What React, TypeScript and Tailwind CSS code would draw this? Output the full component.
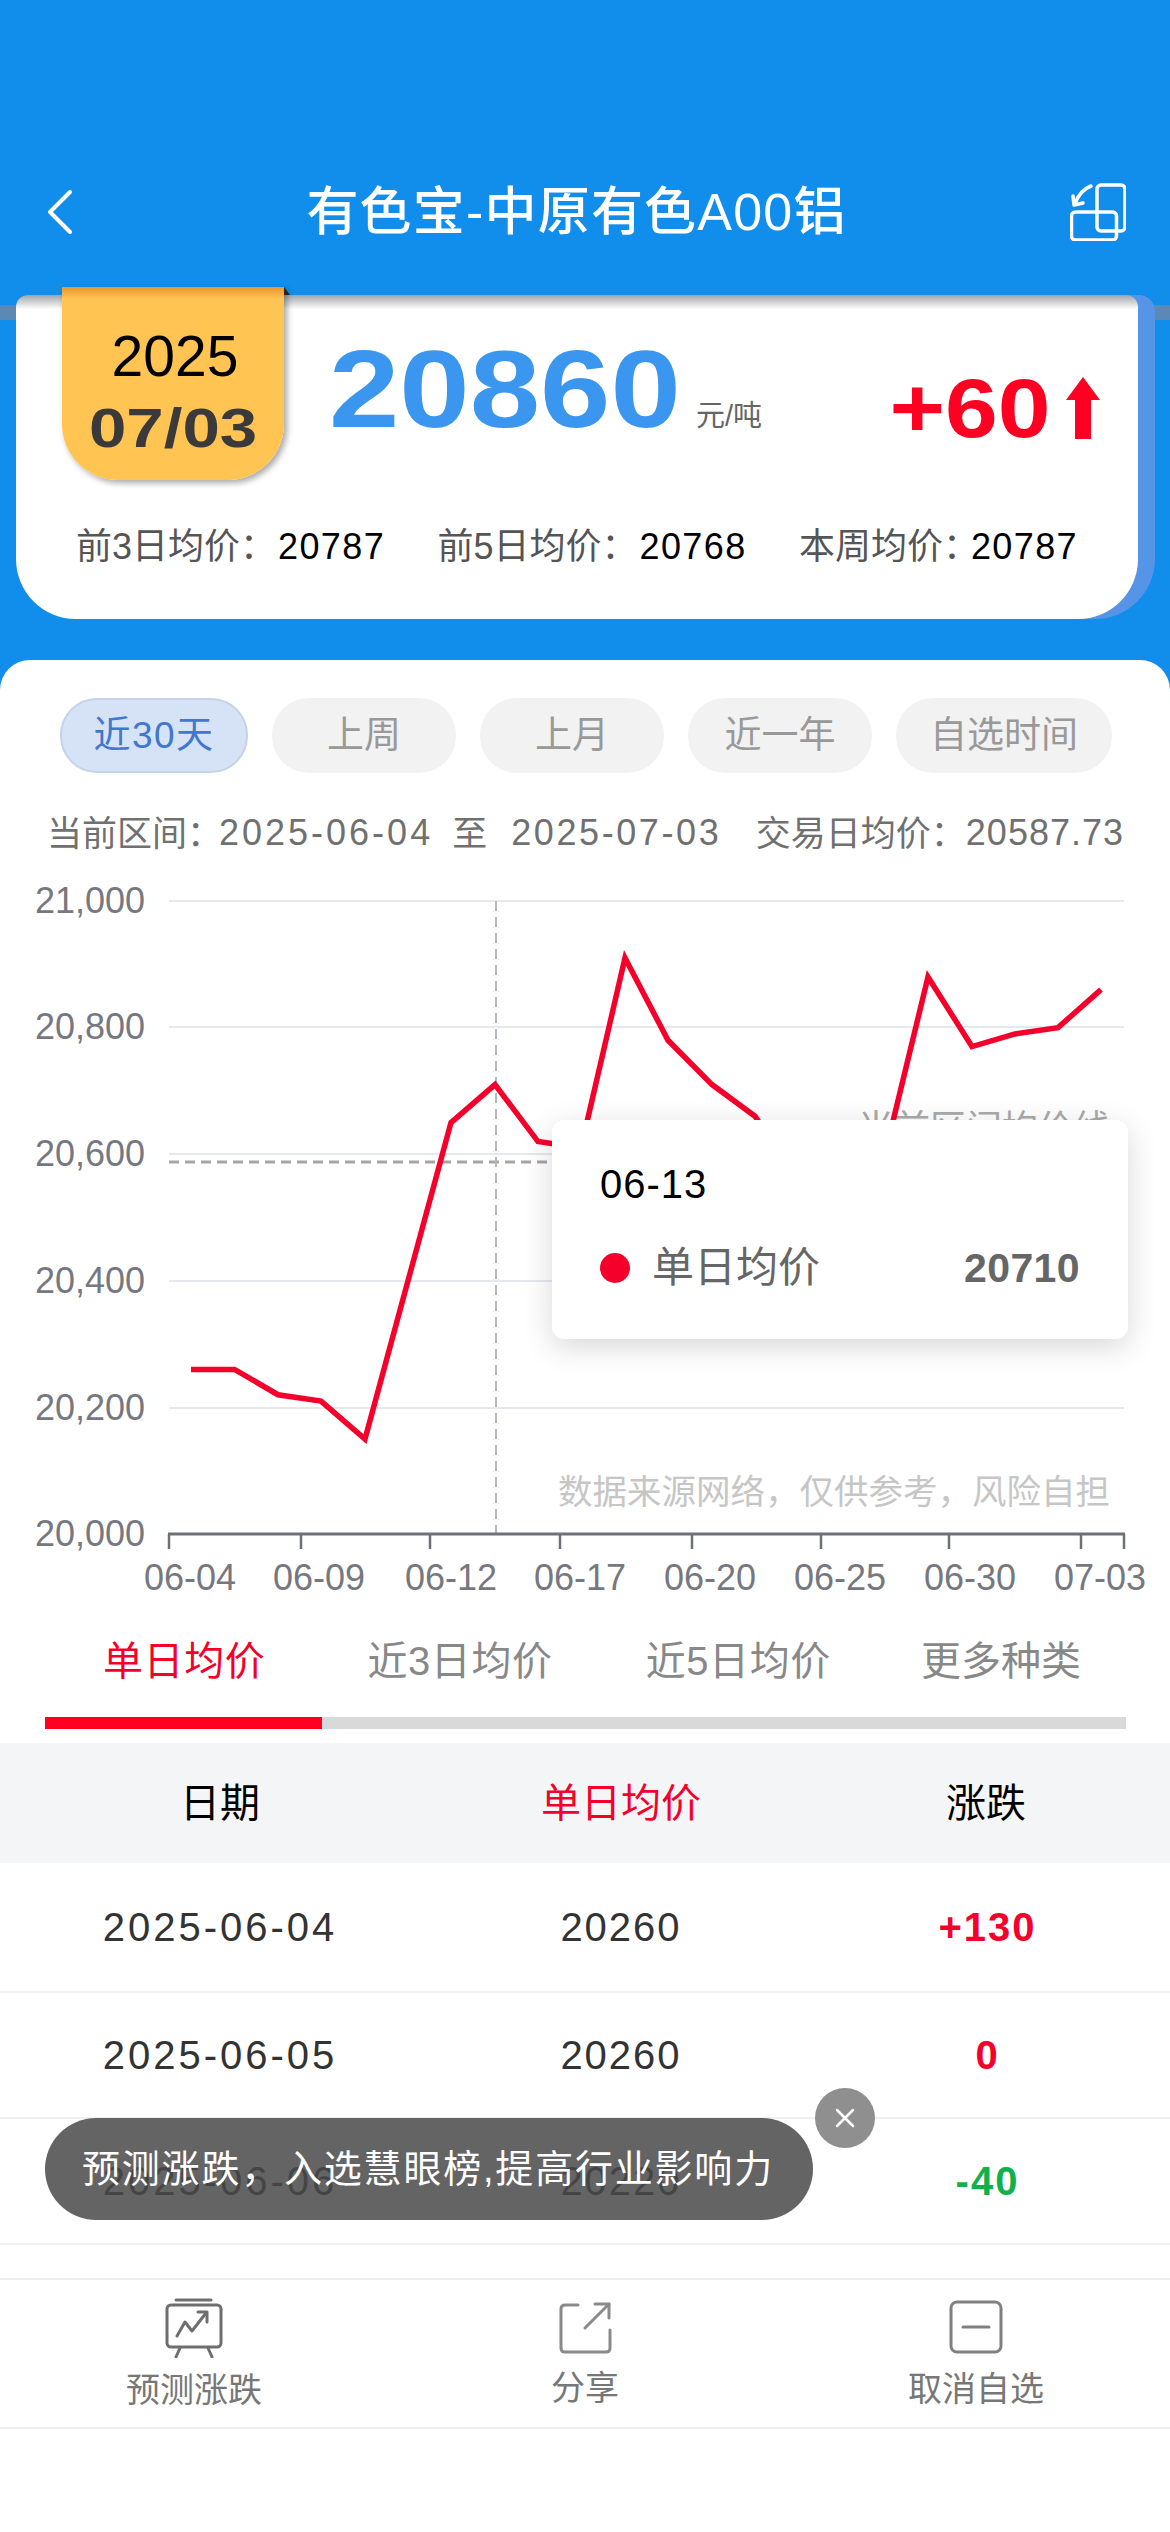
const vals = [20260,20260,20220,20210,20150,20400,20650,20710,20620,20610,20910,20780,20710,20660,20560,20400,20600,20880,20770,20790,20800,20860];
const xs = [191,234.5,278,321,365,408,451,495,538,581,625,668,712,755,798,842,885,928,972,1015,1058,1101];
const points = vals.map((v, i) => `${xs[i]},${1534 - (v - 20000) * 0.633}`).join(" ");

const grid = [
  { y: 901, t: "21,000" },
  { y: 1027, t: "20,800" },
  { y: 1154, t: "20,600" },
  { y: 1281, t: "20,400" },
  { y: 1408, t: "20,200" },
];
const ticks = [169, 301, 430, 560, 692, 821, 949, 1081, 1124];
const xLabels = [
  [190, "06-04"], [319, "06-09"], [451, "06-12"], [580, "06-17"],
  [710, "06-20"], [840, "06-25"], [970, "06-30"], [1100, "07-03"],
] as const;

const ranges = [
  { t: "近30天", w: "w-[188px]", active: true },
  { t: "上周", w: "w-[184px]" },
  { t: "上月", w: "w-[184px]" },
  { t: "近一年", w: "w-[184px]" },
  { t: "自选时间", w: "w-[216px]" },
];

const rows = [
  { d: "2025-06-04", v: "20260", c: "+130", cls: "text-[#F5002B]", h: "h-[130px]" },
  { d: "2025-06-05", v: "20260", c: "0", cls: "text-[#F5002B]", h: "h-[126px]" },
  { d: "2025-06-06", v: "20220", c: "-40", cls: "text-[#10B14B]", h: "h-[126px]" },
];

function Chart() {
  return (
    <div className="relative h-[740px] w-full mt-[22px]">
      <svg width="1170" height="740" viewBox="0 880 1170 740" className="block">
        {grid.map((g) => (
          <g key={g.y}>
            <line x1="169" x2="1124" y1={g.y} y2={g.y} stroke="#E6E8F0" strokeWidth="2" />
            <text x="145" y={g.y + 12} textAnchor="end" fontSize="36" fill="#77787F">{g.t}</text>
          </g>
        ))}
        <text x="145" y="1546" textAnchor="end" fontSize="36" fill="#77787F">20,000</text>
        <text x="1110" y="1141" textAnchor="end" fontSize="36" fill="#AAAAAA">当前区间均价线</text>
        <line x1="169" x2="1124" y1="1162" y2="1162" stroke="#A5A5A5" strokeWidth="3" strokeDasharray="10 6" />
        <line x1="496" x2="496" y1="901" y2="1534" stroke="#B5B7BD" strokeWidth="2" strokeDasharray="10 6" />
        <polyline points={points} fill="none" stroke="#F5002B" strokeWidth="5.5" strokeLinejoin="miter" />
        <text x="1110" y="1504" textAnchor="end" fontSize="34.5" fill="#C6C6C6">数据来源网络，仅供参考，风险自担</text>
        <line x1="168" x2="1125" y1="1534" y2="1534" stroke="#6E7079" strokeWidth="3" />
        {ticks.map((x) => (
          <line key={x} x1={x} x2={x} y1="1534" y2="1549" stroke="#6E7079" strokeWidth="2.5" />
        ))}
        {xLabels.map(([x, t]) => (
          <text key={t} x={x} y="1590" textAnchor="middle" fontSize="36" fill="#77787F">{t}</text>
        ))}
      </svg>
      <div className="absolute left-[552px] top-[240px] w-[576px] h-[219px] bg-white rounded-[12px] shadow-[0_8px_30px_rgba(0,0,0,0.16)] px-[48px] pt-[40px]">
        <div className="text-[40px] leading-[48px] tracking-[1px] text-black">06-13</div>
        <div className="flex items-center mt-[36px] h-[48px]">
          <span className="w-[30px] h-[30px] rounded-full bg-[#F5002B]" />
          <span className="ml-[22px] text-[42px] leading-none text-[#666666]">单日均价</span>
          <span className="ml-auto text-[41px] leading-none font-bold tracking-[0.4px] text-[#666666]">20710</span>
        </div>
      </div>
    </div>
  );
}

export default function App() {
  return (
    <div className="relative w-[1170px] h-[2532px] overflow-hidden bg-white [font-family:'Liberation_Sans','Noto_Sans_CJK_SC',sans-serif]">
      {/* blue top */}
      <div className="relative h-[690px] bg-[#118DEC] pt-[164px]">
        <div className="flex items-center justify-between h-[96px] pl-[47px] pr-[44px] text-white">
          <svg width="26" height="46" viewBox="0 0 26 46" fill="none" stroke="white" strokeWidth="4" strokeLinecap="round" strokeLinejoin="round">
            <path d="M23 3 L3 23 L23 43" />
          </svg>
          <span className="ml-[10px] text-[52px] leading-none font-medium tracking-[1.2px]">有色宝-中原有色A00铝</span>
          <svg width="56" height="58" viewBox="0 0 56 58" fill="none" stroke="white" strokeWidth="3.5" strokeLinejoin="round" strokeLinecap="round">
            <rect x="27" y="2" width="28" height="46" rx="4" />
            <rect x="1.5" y="29" width="45" height="28" rx="4" />
            <path d="M21 3 C13 6 8 12 5 21" />
            <path d="M3 13 L4 22 L13 20" />
          </svg>
        </div>

        <div className="absolute left-0 top-[305px] w-full h-[15px] bg-[#5B88B5]" />

        <div className="absolute left-[16px] top-[295px] w-[1139px] h-[324px]">
          <div className="absolute left-[40px] top-0 w-[1099px] h-full bg-[#5594E6] rounded-t-[16px] rounded-b-[60px]" />
          <div className="absolute left-0 top-0 w-[1122px] h-full rounded-t-[12px] rounded-b-[60px] bg-[linear-gradient(#A0A4A8_0px,#FFFFFF_14px)]">
            <div className="flex items-start h-[190px]">
              <span className="ml-[313px] mt-[39px] text-[110px] leading-none font-bold origin-left scale-x-[1.15] text-[#3A96EE]">20860</span>
              <span className="ml-[61px] mt-[107px] text-[29px] leading-none text-[#666666]">元/吨</span>
              <span className="ml-auto mt-[71px] text-[84px] leading-none font-bold origin-right scale-x-[1.13] text-[#FF0022]">+60</span>
              <svg width="34" height="62" viewBox="0 0 34 62" fill="#FF0022" className="ml-[16px] mr-[38px] mt-[82px]">
                <path d="M17 0 L34 23 L25 23 L25 62 L9 62 L9 23 L0 23 Z" />
              </svg>
            </div>
            <div className="flex items-center justify-between h-[50px] mt-[37px] pl-[60px] pr-[60px] text-[36px] leading-none">
              <span className="text-[#555555]">前3日均价：<span className="ml-[2px] tracking-[1.4px] text-black">20787</span></span>
              <span className="text-[#555555]">前5日均价：<span className="ml-[2px] tracking-[1.4px] text-black">20768</span></span>
              <span className="text-[#555555]">本周均价：<span className="-ml-[8px] tracking-[1.4px] text-black">20787</span></span>
            </div>
          </div>
        </div>

        {/* date ribbon */}
        <div className="absolute left-[284px] top-[287px] w-0 h-0 border-r-[6px] border-b-[8px] border-r-transparent border-b-[#3A2A10]" />
        <div className="absolute left-[62px] top-[287px] w-[222px] h-[193px] rounded-b-[56px] bg-[linear-gradient(#E8962F_0px,#FFC452_12px)] shadow-[3px_3px_6px_rgba(0,0,0,0.35)] flex flex-col items-center">
          <span className="mt-[41px] ml-[4px] text-[57px] leading-none text-black">2025</span>
          <span className="mt-[15px] text-[56px] leading-none font-bold scale-x-[1.2] text-[#3A3A3A]">07/03</span>
        </div>
      </div>

      {/* white panel */}
      <div className="relative -mt-[30px] bg-white rounded-t-[30px] pt-[38px]">
        <div className="flex gap-[24px] pl-[60px]">
          {ranges.map((r) => (
            <div
              key={r.t}
              className={`${r.w} h-[75px] rounded-[37px] flex items-center justify-center text-[37px] leading-none ${r.active ? "bg-[#D6E3F7] border-2 border-[#C5D3EA] text-[#3F78CC] tracking-[1.5px]" : "bg-[#F2F2F2] text-[#999999]"}`}
            >
              {r.t}
            </div>
          ))}
        </div>

        <div className="flex items-center mt-[35px] h-[50px] pl-[47px] pr-[46px] text-[35px] leading-none text-[#707070] whitespace-nowrap">
          <span className="w-[172px]">当前区间：</span>
          <span className="text-[36px] tracking-[3px]">2025-06-04</span>
          <span className="ml-[19px]">至</span>
          <span className="ml-[24px] text-[36px] tracking-[2.6px]">2025-07-03</span>
          <span className="ml-auto">交易日均价：</span>
          <span className="text-[36px] tracking-[1px]">20587.73</span>
        </div>

        <Chart />

        <div className="relative h-[97px] text-[40px] tracking-[0.6px] text-[#888888]">
          <div className="flex items-center h-[82px] leading-none">
            <span className="ml-[103px] text-[#F5002B]">单日均价</span>
            <span className="ml-[102px]">近3日均价</span>
            <span className="ml-[93px]">近5日均价</span>
            <span className="ml-[90px] tracking-normal">更多种类</span>
          </div>
        </div>
        <div className="ml-[45px] w-[1081px] h-[12px] bg-[#D9D9D9]">
          <div className="w-[277px] h-full bg-[#FF0022]" />
        </div>

        <div className="grid grid-cols-[440px_362px_368px] items-center h-[120px] mt-[14px] bg-[#F4F5F7] text-[40px] leading-none text-center text-black">
          <span>日期</span>
          <span className="text-[#F5002B]">单日均价</span>
          <span>涨跌</span>
        </div>

        {rows.map((r) => (
          <div key={r.d} className={`grid grid-cols-[440px_362px_368px] items-center ${r.h} border-b-2 border-[#F0F0F0] text-center text-[40px] leading-none text-[#333333]`}>
            <span className="tracking-[3px]">{r.d}</span>
            <span className="tracking-[2px]">{r.v}</span>
            <span className={`pl-[3px] font-bold tracking-[2px] ${r.cls}`}>{r.c}</span>
          </div>
        ))}

        <div className="grid grid-cols-3 mt-[33px] h-[151px] border-y-2 border-[#EFEFEF] text-[34px] leading-none text-[#777777]">
          <div className="flex flex-col items-center w-[388px]">
            <svg width="58" height="60" viewBox="0 0 58 60" fill="none" stroke="#6E6E6E" strokeWidth="3" strokeLinejoin="round" strokeLinecap="round" className="mt-[18px]">
              <path d="M11 2 H46" />
              <rect x="2" y="7" width="54" height="42" rx="4" />
              <path d="M12 38 L20 24 L27 33 L41 15" />
              <path d="M33 14 L42 14 L42 24" />
              <path d="M15 50 L11 59 M43 50 L47 59" />
            </svg>
            <span className="mt-[15px]">预测涨跌</span>
          </div>
          <div className="flex flex-col items-center w-[390px]">
            <svg width="54" height="54" viewBox="0 0 54 54" fill="none" stroke="#8A8A8A" strokeWidth="3" strokeLinejoin="round" strokeLinecap="round" className="mt-[21px]">
              <path d="M20 4 H7 Q3 4 3 8 V47 Q3 51 7 51 H48 Q52 51 52 47 V29" />
              <path d="M27 27 L51 3" />
              <path d="M37 3 H51 V17" />
            </svg>
            <span className="mt-[16px]">分享</span>
          </div>
          <div className="flex flex-col items-center w-[392px]">
            <svg width="54" height="54" viewBox="0 0 54 54" fill="none" stroke="#808080" strokeWidth="3" strokeLinejoin="round" strokeLinecap="round" className="mt-[20px]">
              <rect x="2" y="2" width="50" height="50" rx="6" />
              <path d="M14 27 H40" />
            </svg>
            <span className="mt-[18px]">取消自选</span>
          </div>
        </div>
      </div>

      {/* toast */}
      <div className="absolute left-[45px] top-[2118px] w-[768px] h-[102px] rounded-full bg-[rgba(73,73,73,0.85)] flex items-center pl-[37px] text-[38px] leading-none tracking-[1.8px] text-white whitespace-nowrap">
        预测涨跌<span className="mr-[3px]">，</span>入选慧眼榜,提高行业影响力
      </div>
      <div className="absolute left-[815px] top-[2088px] w-[60px] h-[60px] rounded-full bg-[#8F8F8F] flex items-center justify-center">
        <svg width="22" height="22" viewBox="0 0 22 22" fill="none" stroke="white" strokeWidth="2.5" strokeLinecap="round">
          <path d="M3 3 L19 19 M19 3 L3 19" />
        </svg>
      </div>
    </div>
  );
}
